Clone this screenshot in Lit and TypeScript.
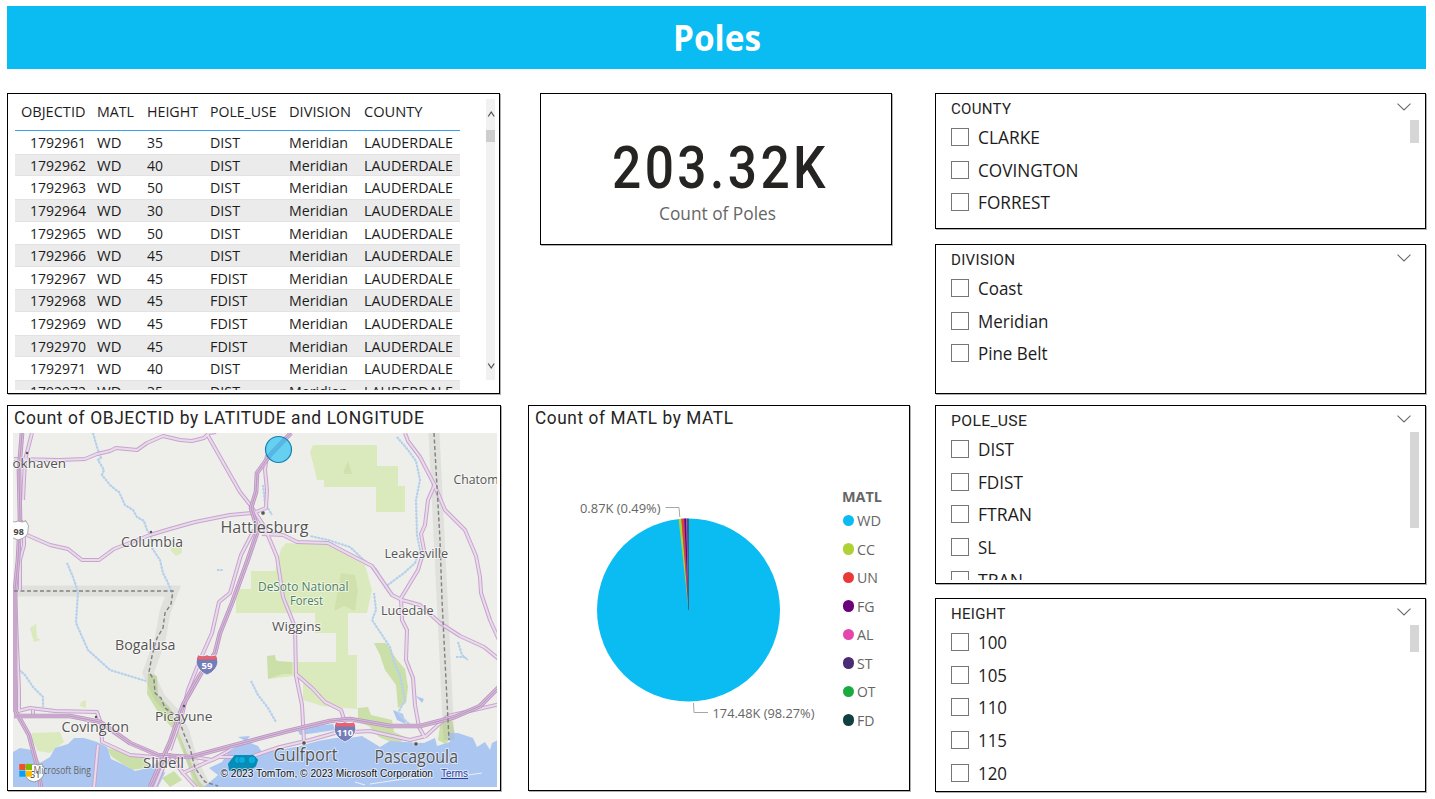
import { LitElement, html, svg, css } from "lit";
import { customElement, property } from "lit/decorators.js";

type Label = [string, number];

const SANS = "'Open Sans','Noto Sans',sans-serif";
const DIN = "Roboto,'Open Sans',sans-serif";

/** One line of text set to an exact measure. */
@customElement("fit-text")
class FitText extends LitElement {
  @property() text = "";
  @property({ type: Number }) w = 50;
  @property({ type: Number }) h = 20;
  @property({ type: Number }) base = 15;
  @property({ type: Number }) size = 15;
  @property() face = "sans";
  @property() color = "#1c1c1c";
  @property({ type: Number }) weight = 400;
  @property({ type: Number }) track = 0;
  static styles = css`
    :host { display: block; flex: none; }
    svg { display: block; overflow: visible; }
  `;
  render() {
    return html`<svg width=${this.w} height=${this.h}>
      <text x="0" y=${this.base} fill=${this.color} font-size=${this.size} font-weight=${this.weight}
        letter-spacing=${this.track} font-family=${this.face === "din" ? DIN : SANS}
        textLength=${this.w + this.track} lengthAdjust="spacingAndGlyphs">${this.text}</text>
    </svg>`;
  }
}

@customElement("pole-table")
class PoleTable extends LitElement {
  static styles = css`
    :host { display: flex; height: 100%; box-sizing: border-box; padding: 5px 4.5px 3px 7px; justify-content: space-between; }
    .grid { width: 445px; overflow: hidden; }
    .row, .head { display: grid; grid-template-columns: 76.5px 50px 63px 79px 75px 1fr; }
    .head { height: 31px; border-bottom: 1px solid #39a0f0; }
    .row { height: 22.65px; }
    .row:nth-child(odd) { background: #ebebeb; box-shadow: inset 0 1px #e2e2e2, inset 0 -1px #e2e2e2; }
    .cell { padding-left: 5.300px; }
    .cell.num { padding: 0 5.5px 0 0; display: flex; justify-content: flex-end; }
    .head .cell.num { padding-right: 6.500px; }
    .bar { width: 9px; height: 281px; background: #f1f1f1; display: flex; flex-direction: column; }
    .bar svg { display: block; height: 31px; }
    .thumb { height: 12px; background: #cdcdcd; }
    .space { flex: 1; }
  `;
  render() {
    const heads: Label[] = [["OBJECTID", 64.5], ["MATL", 37], ["HEIGHT", 51], ["POLE_USE", 66.5], ["DIVISION", 62], ["COUNTY", 58.5]];
    const heights = [35, 40, 50, 30, 50, 45, 45, 45, 45, 45, 40, 35];
    const uses = ["DIST", "DIST", "DIST", "DIST", "DIST", "DIST", "FDIST", "FDIST", "FDIST", "FDIST", "DIST", "DIST"];
    const cell = (t: string, w: number, base: number, num = false) =>
      html`<div class="cell ${num ? "num" : ""}"><fit-text text=${t} w=${w} h="22" base=${base} size="14.800"></fit-text></div>`;
    return html`
      <div class="grid">
        <div class="head">${heads.map(([t, w], i) => cell(t, w, 17.5, i === 0))}</div>
        ${heights.map((h, i) => html`<div class="row">
          ${cell(String(1792961 + i), 56, 17, true)}${cell("WD", 24.5, 17)}${cell(String(h), 16, 17)}
          ${cell(uses[i], uses[i] === "DIST" ? 30 : 37.5, 17)}${cell("Meridian", 59, 17)}${cell("LAUDERDALE", 89, 17)}
        </div>`)}
      </div>
      <div class="bar">
        <svg width="9" height="31"><path d="M2.200 17.500l3-4.500 3 4.500" fill="none" stroke="#505050" stroke-width="1.2"/></svg>
        <div class="thumb"></div><div class="space"></div>
        <svg width="9" height="31"><path d="M2.200 14.500l3 4.500 3-4.500" fill="none" stroke="#505050" stroke-width="1.2"/></svg>
      </div>`;
  }
}

@customElement("check-slicer")
class CheckSlicer extends LitElement {
  @property() name = "";
  @property({ type: Number }) nameWidth = 60;
  @property({ attribute: false }) items: Label[] = [];
  @property({ type: Number }) thumb = 0;
  static styles = css`
    :host { display: flex; flex-direction: column; height: 100%; box-sizing: border-box; padding: 0 6px 3px 15px; }
    .head { display: flex; justify-content: space-between; height: 26px; flex: none; padding-right: 8px; }
    .chev { display: block; margin-top: 8.500px; }
    .body { display: flex; justify-content: space-between; flex: 1; min-height: 0; overflow: hidden; }
    .list { padding-top: 8px; }
    .item { display: flex; gap: 8.700px; height: 32.7px; }
    .box { width: 18px; height: 18px; box-sizing: border-box; border: 1px solid #767676; flex: none; }
    .thumb { width: 9px; background: #d6d6d6; }
  `;
  render() {
    return html`
      <div class="head">
        <fit-text text=${this.name} w=${this.nameWidth} h="24" base="20" size="15.3" face="din" color="#252423" track="0.3"></fit-text>
        <svg class="chev" width="14" height="8"><path d="M.5.6L7 7L13.500.6" fill="none" stroke="#6b6b6b" stroke-width="1.1"/></svg>
      </div>
      <div class="body">
        <div class="list">${this.items.map(([t, w]) => html`<div class="item"><div class="box"></div>
          <fit-text text=${t} w=${w} h="24" base="15.800" size="17.500"></fit-text></div>`)}</div>
        ${this.thumb ? html`<div class="thumb" style="height:${this.thumb}px"></div>` : ""}
      </div>`;
  }
}

const WD = "#0abcf2";

@customElement("matl-pie")
class MatlPie extends LitElement {
  static styles = css`
    :host { display: flex; }
    svg { display: block; }
    .legend { padding-top: 57px; }
    .key { display: flex; height: 28.55px; gap: 2.500px; }
    .dot { width: 11.400px; height: 11.400px; border-radius: 50%; margin: 3.600px 0 0 1px; }
  `;
  render() {
    const cx = 688.5, cy = 610, r = 91.5;
    const shares: [string, number][] = [["#b0d136", 0.49], ["#e83a38", 0.49], ["#6b007b", 0.35], ["#e645ab", 0.17], ["#4a2d75", 0.13], ["#1aab40", 0.05], ["#124040", 0.05]];
    let at = 98.27;
    const point = (p: number) => {
      const a = (p / 100) * 2 * Math.PI;
      return `${cx + r * Math.sin(a)} ${cy - r * Math.cos(a)}`;
    };
    const slices = shares.map(([c, v]) => {
      const d = `M${cx} ${cy}L${point(at)}A${r} ${r} 0 0 1 ${point(at + v)}Z`;
      at += v;
      return svg`<path d=${d} fill=${c}/>`;
    });
    const label = (x: number, y: number, w: number, t: string) =>
      svg`<text x=${x} y=${y} font-size="13.4" fill="#666" font-family=${SANS} textLength=${w} lengthAdjust="spacingAndGlyphs">${t}</text>`;
    const keys: [string, string, number][] = [["WD", WD, 24], ["CC", "#b0d136", 18], ["UN", "#e83a38", 21], ["FG", "#6b007b", 17.5], ["AL", "#e645ab", 16.5], ["ST", "#4a2d75", 15.5], ["OT", "#1aab40", 18.5], ["FD", "#124040", 17.5]];
    return html`
      <svg width="313" height="360" viewBox="529 430 313 360">
        <circle cx=${cx} cy=${cy} r=${r} fill=${WD}/>
        ${slices}
        <path d="M688.500 610V519" stroke="#3d5a70" stroke-width=".8"/>
        <path d="M665.500 507.500H679L679.800 517M693.500 703L694 712.500H708" fill="none" stroke="#a6a6a6"/>
        ${label(580, 513, 80.5, "0.87K (0.49%)")}${label(712.5, 718, 102, "174.48K (98.27%)")}
      </svg>
      <div class="legend">
        <fit-text text="MATL" w="40" h="24" base="15" size="14.8" weight="700" color="#666"></fit-text>
        ${keys.map(([t, c, w]) => html`<div class="key">
          <div class="dot" style="background:${c}"></div>
          <fit-text text=${t} w=${w} h="24" base="15" size="15" color="#666"></fit-text></div>`)}
      </div>`;
  }
}

@customElement("bing-map")
class BingMap extends LitElement {
  static styles = css`
    :host { display: block; }
    svg { display: block; }
  `;
  render() {
    const minor = [
      "M14 459L60 460L85 459L97 454L110 451L116 448L137 450L147 443L163 436L180 440L192 441L204 438L209 433L216 432",
      "M207 434L228 471L240 492L251 506L262 523L267 533L277 557L283 597L295 627L296 676L302 705L304 742",
      "M27 535L50 545L68 549L82 560H99L114 549L150 535L170 529L195 522L230 515L252 513",
      "M267 455L265 470L267 490L266 508L256 512",
      "M262 534L283 535L297 542L328 543L345 552L372 566L392 595L402 600L420 605L440 623L460 636L484 647L500 660",
      "M405 433L408 441L420 457L434 484L445 510L465 530L476 556L480 577L481 593L490 620L499 640",
      "M435 484L428 500L425 525L421 534L424 550L418 570L401 598L402 620L407 630L406 660L413 678L415 705L419 727L425 738",
      "M254 530L241 555L230 593L219 602L212 633L200 660L188 690L182 715L170 750",
      "M296 674L312 688L325 702L341 710L345 722",
      "M14 712L30 708L55 711L97 712L101 724L102 742L130 755L155 757H194L212 760L230 750",
      "M98 745L94 787M33 710V715M155 787L162 770L170 755L183 773L205 763L219 757H250L280 747L310 740L335 733L370 731L410 740L426 736L448 716L500 704",
      "M170 755L183 773L196 787",
      "M24 520V545L20 560V590M15 590L17 645L19 690V712M32 433L25 460L23 500",
    ];
    const major = [
      "M22 433L19 470L20 520L18 560L15 590V710L29 735L37 765L41 787",
      "M14 716H70L100 722L130 743L158 755L190 757L220 749L250 741L288 731L330 721L350 719L390 726H420L455 717L480 706L499 687",
      "M291 433L270 455L257 473L256 492L251 508L258 530L247 562L232 603L220 633L215 653L200 675L183 705L170 742L150 787",
    ];
    const rivers = [
      "M93 433L97 447L101 458L98 460L104 470L102 475L110 485L116 490L119 492L125 505L133 510L137 517L144 521L147 530L151 535L152 548L160 560L163 573L168 583L172 593",
      "M67 563L73 577L78 592L76 623L88 650L110 670L146 681M14 665L25 675L33 687L43 697V707",
      "M397 437L408 450L416 461L420 480L416 500L417 535L420 550L415 563L404 573L385 587L377 570L367 563L350 547L328 540L310 536",
      "M374 593L376 610L372 620L378 629L390 647L395 665L400 675L405 700L398 713L410 725",
      "M263 485L265 503L272 515M251 681L258 695L268 708L276 722M458 642L462 655L468 660M456 657H465M217 570H223",
    ];
    const names: [string, number, number, number, number][] = [
      ["okhaven", 12.5, 468, 53.5, 13.5], ["Columbia", 121, 547.3, 62, 14], ["Hattiesburg", 220.5, 532.7, 88, 17],
      ["Chatom", 453.5, 484, 45, 13.2], ["Leakesville", 384.5, 558.3, 63.5, 13.2], ["Lucedale", 381, 615, 52.5, 13.2],
      ["Wiggins", 272, 631, 49, 13.2], ["Bogalusa", 115, 650, 60.5, 14], ["Picayune", 155, 721, 57.5, 13.5],
      ["Covington", 61.5, 732.3, 67.5, 14], ["Slidell", 143, 768.3, 41, 14.8], ["Gulfport", 273.5, 760.5, 64, 17.3], ["Pascagoula", 374.5, 763, 83.5, 17.3],
    ];
    const text = (t: string, x: number, y: number, w: number, s: number, c: string, weight = 400) =>
      svg`<text x=${x} y=${y} font-size=${s} font-weight=${weight} fill=${c} stroke="#fff" stroke-opacity=".6" stroke-width="2" paint-order="stroke" stroke-linejoin="round" textLength=${w} lengthAdjust="spacingAndGlyphs">${t}</text>`;
    const line = (d: string, c: string, w: number) => svg`<path d=${d} fill="none" stroke=${c} stroke-width=${w} stroke-linejoin="round"/>`;
    const interstate = (x: number, y: number, t: string) => svg`<g>
      <path d="M${x - 9} ${y - 9}q4.500 2 9 0q4.500 2 9 0q4 8-1 14q-3 4-8 6q-5-2-8-6q-5-6-1-14z" fill="#757db8" stroke="#fff" stroke-opacity=".7"/>
      <path d="M${x - 9} ${y - 8.500}q4.500 2 9 0q4.500 2 9 0l1 4h-20z" fill="#f0606a"/>
      <text x=${x} y=${y + 5} font-size="9.500" font-weight="700" fill="#fff" text-anchor="middle">${t}</text></g>`;
    return html`<svg width="484" height="354" viewBox="13 433 484 354" font-family=${SANS}>
      <rect x="13" y="433" width="485" height="354" fill="#eeeeea"/>
      <g fill="#dbeabd">
        <path d="M313 445H377V466H398V486H405V512H376V487H324V480H317L313 463L310 452z"/>
        <path d="M281 549L286 543L328 545L365 565L372 590L367 613H348V655H357V709L322 706L303 700V678L293 676L268 679V656L281 662H336V633H315V613H236V589H251V571H275z"/>
        <path d="M170 547H182V553L176 556L171 551zM32 733L60 732L64 742L50 753L38 751L32 740zM30 628L36 624L37 638L41 640L34 642zM81 702L86 700V708L80 706z"/>
      </g>
      <g fill="#d1e1ad"><path d="M344 470L348 461L352 474H344zM341 573L355 575L358 590L355 611L344 606L334 611L338 590z"/></g>
      <g fill="#cbdfa8">
        <path d="M267 656L275 655L276 661L292 662V674L283 674L268 679z"/>
        <path d="M148 673L157 676L158 695L170 708L180 736L187 753L199 781L205 787H195L186 760L174 730L158 712L147 694z"/>
        <path d="M374 643L386 643L397 660L405 669L408 687L406 703L398 708L396 685L385 670L380 655zM358 708L368 707L371 715L392 720L394 732L405 737L398 745L379 737L369 726L358 722zM441 719L451 715L455 735L445 744L438 740z"/>
        <path d="M106 748L121 751L144 757L151 767L132 770L112 757zM162 778L174 771L182 780L170 787z"/>
      </g>
      <g fill="#aac6f1">
        <path d="M13 752L20 748L32 750L40 763L50 757L55 748L68 744L74 738L84 738L97 742L107 747L111 759L122 764L135 771L148 768L158 762L165 773L158 787H13z"/>
        <path d="M204 787L218 775L209 768L222 762L230 750L246 741L258 746L262 752L280 750L300 746L318 741L335 738L350 738L362 736L380 747L390 741L405 742L424 743L435 738L437 746L450 742L448 733L458 733L473 738L477 747L485 742L490 750L492 743L498 740V787z"/>
        <path d="M298 731L315 726L333 724L335 730L315 733L300 735zM393 710L397 720L406 724L403 714zM238 737L250 736L246 741zM416 696L424 699L422 703z"/>
      </g>
      <path d="M370 784L397 780L425 777M455 777L482 773M355 782L365 785" stroke="#e8edf2" stroke-width="1.200" fill="none"/>
      <path d="M14 591H173L165 612L160 640L148 673L160 698L174 713L184 732L192 760L205 787M434 433L449 740" fill="none" stroke="#aaa" stroke-opacity=".2" stroke-width="11"/>
      ${rivers.map((d) => line(d, "#bcd5ec", 1.2))}
      <g stroke-dasharray="2 1.500">${rivers.map((d) => line(d, "#b4d0eb", 2.2))}</g>
      <g>${minor.map((d) => line(d, "#c9a3d0", 4))}</g>
      <g>${minor.map((d) => line(d, "#e9dcea", 2))}</g>
      <g>${major.map((d) => line(d, "#b497bb", 4.6))}</g>
      <g>${major.map((d) => line(d, "#dab9dc", 3))}</g>
      <g>${major.map((d) => line(d, "#bb95c3", 1))}</g>
      <path d="M14 591H173L171 604L165 613L163 628L157 638L152 656L149 672L154 680L155 693L161 698L165 708L178 717L184 734L190 748L195 768L205 782L218 786M434 433L440 540L442 600L446 680L449 740" fill="none" stroke="#808080" stroke-width="1.400" stroke-dasharray="4 2.500"/>
      ${[[27, 453], [151, 532], [96, 717], [184, 706]].map(([x, y]) => svg`<circle cx=${x} cy=${y} r="1.200" fill="#555"/>`)}
      ${[[263, 513], [304, 743], [416, 744]].map(([x, y]) => svg`<circle cx=${x} cy=${y} r="2.200" fill="#555" stroke="#fff" stroke-opacity=".6"/>`)}
      ${names.map(([t, x, y, w, s]) => text(t, x, y, w, s, "#555"))}
      ${text("DeSoto National", 258, 591.3, 90.5, 12.2, "#4d8062")}${text("Forest", 290, 604.5, 33, 12.2, "#4d8062")}
      <path d="M11 521q4 2 7 0q4 2 8 0q4 5 2 9q1 7-10 10q-10-3-9-9z" fill="#fff" stroke="#aaa"/>
      <text x="13.500" y="535" font-size="9" font-weight="700" fill="#444">98</text>
      ${interstate(207, 664, "59")}${interstate(345, 731, "110")}
      <path d="M27 764q4 2 7 0q4 2 8 0q4 5 2 9q-1 7-10 9q-9-2-9-9q-1-5 2-9z" fill="#fff" stroke="#999"/>
      <text x="30" y="778" font-size="9" fill="#333">51</text>
      <path d="M19.300 764h6v6h-6z" fill="#f25022"/><path d="M26 764h6v6h-6z" fill="#7fba00"/><path d="M19.300 770.700h6v6h-6z" fill="#00a4ef"/><path d="M26 770.700h6v6h-6z" fill="#ffb900"/>
      <text x="33.500" y="774" font-size="10" fill="#666" textLength="57.500" lengthAdjust="spacingAndGlyphs">Microsoft Bing</text>
      <circle cx="278.500" cy="449.500" r="13" fill="#0abcf2" fill-opacity=".6" stroke="#1482b4" stroke-width="1.200"/>
      <path d="M229 764L235 756H253L257 760L255 766L250 769L240 771L230 770z" fill="#078db8" stroke="#078db8" stroke-width="2" stroke-linejoin="round"/>
      <g fill="#0aaede" stroke="#0680aa" stroke-width=".8"><circle cx="238" cy="760" r="3.600"/><circle cx="242" cy="760" r="3.600"/><circle cx="252" cy="760" r="4"/></g>
      <g font-family="'Liberation Sans',sans-serif">
        ${text("© 2023 TomTom, © 2023 Microsoft Corporation", 220.5, 776.5, 212.5, 10, "#111")}
        ${text("Terms", 441, 776.5, 27, 10, "#2b3f9c")}
      </g>
      <path d="M441 778.500H468" stroke="#2b3f9c"/>
    </svg>`;
  }
}

@customElement("app-root")
class AppRoot extends LitElement {
  static styles = css`
    :host { display: block; box-sizing: border-box; width: 1435px; height: 799px; padding: 6px 9px 0 7px; background: #fff; overflow: hidden; }
    .banner { height: 63px; background: #0abcf2; display: flex; justify-content: center; }
    .cols { display: flex; padding-top: 24px; }
    .col { display: flex; flex-direction: column; }
    .left { width: 494px; margin-right: 27px; }
    .mid { width: 382px; margin-right: 25px; }
    .right { width: 491px; }
    .panel { box-sizing: border-box; border: 1px solid #000; box-shadow: 1px 1px 0 #b0b0b0; background: #fff; flex: none; }
    .table { width: 493px; height: 301px; margin-bottom: 11px; }
    .map, .pie { height: 386px; }
    .map .title, .pie .title { padding-left: 6px; height: 27px; }
    .map bing-map { padding-left: 5px; }
    .card { width: 352px; height: 152px; margin: 0 0 160px 12px; display: flex; flex-direction: column; align-items: center; }
    .card .value { padding-left: 4px; }
    .card .caption { padding-left: 3px; }
    .county { height: 136px; margin-bottom: 15px; }
    .division { height: 150px; margin-bottom: 11px; }
    .use { height: 179px; margin-bottom: 14px; }
    .height { height: 194px; }
    .pie matl-pie { margin-top: -3px; }
  `;
  render() {
    return html`
      <div class="banner"><fit-text text="Poles" w="88" h="63" base="45" size="35.500" weight="700" color="#fff"></fit-text></div>
      <div class="cols">
        <div class="col left">
          <div class="panel table"><pole-table></pole-table></div>
          <div class="panel map">
            <div class="title"><fit-text text="Count of OBJECTID by LATITUDE and LONGITUDE" w="410" h="27" base="18" size="17.500" face="din" color="#252423" track="0.6"></fit-text></div>
            <bing-map></bing-map>
          </div>
        </div>
        <div class="col mid">
          <div class="panel card">
            <fit-text class="value" text="203.32K" w="213" h="105" base="94" size="60" weight="500" face="din" color="#252423" track="4"></fit-text>
            <fit-text class="caption" text="Count of Poles" w="117" h="30" base="21" size="17.500" color="#666"></fit-text>
          </div>
          <div class="panel pie">
            <div class="title"><fit-text text="Count of MATL by MATL" w="198" h="27" base="18" size="17.500" face="din" color="#252423" track="0.6"></fit-text></div>
            <matl-pie></matl-pie>
          </div>
        </div>
        <div class="col right">
          <div class="panel county"><check-slicer name="COUNTY" nameWidth="60" thumb="23" .items=${[["CLARKE", 62], ["COVINGTON", 100.5], ["FORREST", 72]]}></check-slicer></div>
          <div class="panel division"><check-slicer name="DIVISION" nameWidth="64" .items=${[["Coast", 44.5], ["Meridian", 70.5], ["Pine Belt", 69.5]]}></check-slicer></div>
          <div class="panel use"><check-slicer name="POLE_USE" nameWidth="76" thumb="96" .items=${[["DIST", 36], ["FDIST", 45], ["FTRAN", 54], ["SL", 18], ["TRAN", 45]]}></check-slicer></div>
          <div class="panel height"><check-slicer name="HEIGHT" nameWidth="54.5" thumb="27" .items=${[["100", 29], ["105", 29], ["110", 29], ["115", 29], ["120", 29]]}></check-slicer></div>
        </div>
      </div>`;
  }
}
